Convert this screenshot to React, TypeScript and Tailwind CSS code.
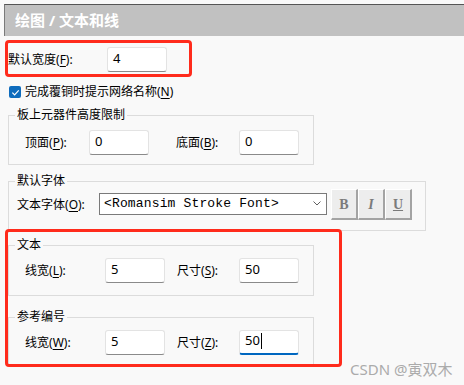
import React from "react";

const Key = ({ t, k }: { t: string; k: string }) => (
	<span>
		{t}(<span className="underline underline-offset-2">{k}</span>):
	</span>
);

const Field = ({ value, focus }: { value: string; focus?: boolean }) => (
	<div
		className={
			"flex h-[25px] w-[60px] items-center rounded-[3px] border border-[#e3e3e3] bg-white pb-[2px] pl-[5px] text-[13px] text-black " +
			(focus ? "border-b-2 border-b-[#0067c0]" : "border-b-[#8a8a8a]")
		}
	>
		{value}
		{focus && <span className="ml-px inline-block h-[16px] w-px bg-black" />}
	</div>
);

const Legend = ({ children }: { children: React.ReactNode }) => (
	<legend className="ml-[6px] px-[2px] text-[12px] leading-[18px] text-black">{children}</legend>
);

const StyleBtn = ({ children }: { children: React.ReactNode }) => (
	<div className="flex h-[31px] w-[27px] items-center justify-center border-b-2 border-l border-r-2 border-t border-b-[#a3a3a3] border-l-white border-r-[#a3a3a3] border-t-white bg-[#ededed] font-['Liberation_Serif',serif] text-[14px] font-bold text-[#7b7b7b]">
		{children}
	</div>
);

export default function App() {
	return (
		<div className="relative h-[385px] w-[464px] overflow-hidden bg-[#f9f9f9] font-['Noto_Sans','Noto_Sans_CJK_SC',sans-serif] text-[12px] text-black">
			<div className="ml-[4px] mt-[4px] flex h-[32px] items-center border-l border-t border-l-[#7a7a7a] border-t-[#555555] bg-[#c1c1c1] pl-[10px] text-[15px] font-bold text-white">
				绘图 / 文本和线
			</div>

			<div className="ml-[8px] mt-[11px] flex h-[25px] items-center">
				<span className="w-[99px]">
					<Key t="默认宽度" k="F" />
				</span>
				<Field value="4" />
			</div>

			<div className="ml-[9px] mt-[13px] flex h-[14px] items-center gap-[4px]">
				<div className="flex h-[12px] w-[12px] items-center justify-center rounded-[2px] bg-[#0f6cbd]">
					<svg width="9" height="9" viewBox="0 0 10 10" fill="none">
						<path d="M1.5 5.2 L4 7.6 L8.6 2.6" stroke="white" strokeWidth="1.3" />
					</svg>
				</div>
				<span>
					完成覆铜时提示网络名称(<span className="underline underline-offset-2">N</span>)
				</span>
			</div>

			<fieldset className="ml-[8px] mt-[7px] w-[306px] border border-[#dcdcdc]">
				<Legend>板上元器件高度限制</Legend>
				<div className="flex items-center pb-[9px] pl-[16px] pt-[6px]">
					<span className="w-[64px]">
						<Key t="顶面" k="P" />
					</span>
					<Field value="0" />
					<span className="ml-[27px] w-[63px]">
						<Key t="底面" k="B" />
					</span>
					<Field value="0" />
				</div>
			</fieldset>

			<fieldset className="ml-[8px] mt-[7px] w-[418px] border border-[#dcdcdc]">
				<Legend>默认字体</Legend>
				<div className="-mt-px flex items-center pb-[10px] pl-[8px]">
					<span className="w-[82px]">
						<Key t="文本字体" k="O" />
					</span>
					<div className="mt-[-2px] flex h-[22px] w-[228px] items-center justify-between border border-[#7a7a7a] bg-white pl-[4px] pr-[5px] font-['Liberation_Mono',monospace] text-[13px] tracking-[0.15px] text-black">
						&lt;Romansim Stroke Font&gt;
						<svg width="8" height="5" viewBox="0 0 8 5" fill="none">
							<path d="M0.5 0.5 L4 4 L7.5 0.5" stroke="#606060" strokeWidth="1" />
						</svg>
					</div>
					<div className="ml-[4px] flex">
						<StyleBtn>B</StyleBtn>
						<StyleBtn>
							<span className="italic">I</span>
						</StyleBtn>
						<StyleBtn>
							<span className="underline">U</span>
						</StyleBtn>
					</div>
				</div>
			</fieldset>

			<fieldset className="ml-[8px] mt-[5px] w-[306px] border border-[#dcdcdc]">
				<Legend>文本</Legend>
				<div className="flex items-center pb-[12px] pl-[16px] pt-[4px]">
					<span className="w-[80px]">
						<Key t="线宽" k="L" />
					</span>
					<Field value="5" />
					<span className="ml-[12px] w-[62px]">
						<Key t="尺寸" k="S" />
					</span>
					<Field value="50" />
				</div>
			</fieldset>

			<fieldset className="ml-[8px] mt-[12px] w-[306px] border border-[#dcdcdc]">
				<Legend>参考编号</Legend>
				<div className="flex items-center pb-[9px] pl-[16px] pt-[4px]">
					<span className="w-[80px]">
						<Key t="线宽" k="W" />
					</span>
					<Field value="5" />
					<span className="ml-[12px] w-[62px]">
						<Key t="尺寸" k="Z" />
					</span>
					<Field value="50" focus />
				</div>
			</fieldset>

			{/* annotation boxes */}
			<div className="absolute left-[5px] top-[40px] h-[37px] w-[187px] rounded-[4px] border-[3px] border-[#ff2b1c]" />
			<div className="absolute left-[5px] top-[229px] h-[138px] w-[337px] rounded-[4px] border-[3px] border-[#ff2b1c]" />

			<div className="absolute left-[350px] top-[358px] text-[15px] text-[#ababab]">CSDN @寅双木</div>
		</div>
	);
}
